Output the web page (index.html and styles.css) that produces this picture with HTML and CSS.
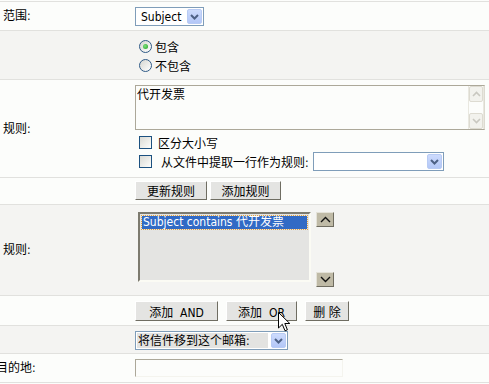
FILE: index.html
```html
<!DOCTYPE html>
<html>
    <head>
        <meta charset="utf-8">
        <link rel="stylesheet" href="styles.css">
    </head>
    <body>
        <div class="form">
            <div class="row row_scope">
                <div class="row__label">范围:</div>
                <div class="row__field">
                    <div class="select select_scope">
                        <span class="select__text">Subject</span>
                        <span class="select__btn"><svg width="9" height="6" viewBox="0 0 9 6"><polyline points="1,1 4.5,4.5 8,1" fill="none" stroke="#4d6185" stroke-width="2"/></svg></span>
                    </div>
                </div>
            </div>
            <div class="row row_gray row_match">
                <div class="row__label"></div>
                <div class="row__field">
                    <div class="radio"><span class="radio__dot radio__dot_checked"></span>包含</div>
                    <div class="radio"><span class="radio__dot"></span>不包含</div>
                </div>
            </div>
            <div class="row row_rule">
                <div class="row__label">规则:</div>
                <div class="row__field">
                    <div class="textarea">
                        <div class="textarea__text">代开发票</div>
                        <div class="textarea__scroll">
                            <span class="scroll-btn"><svg width="9" height="6" viewBox="0 0 9 6"><polyline points="1,5 4.5,1.5 8,5" fill="none" stroke="#c9c8c0" stroke-width="1.6"/></svg></span>
                            <span class="scroll-btn"><svg width="9" height="6" viewBox="0 0 9 6"><polyline points="1,1 4.5,4.5 8,1" fill="none" stroke="#c9c8c0" stroke-width="1.6"/></svg></span>
                        </div>
                    </div>
                    <div class="check"><span class="check__box"></span>区分大小写</div>
                    <div class="check"><span class="check__box"></span><span class="check__label_wide">从文件中提取一行作为规则:</span>
                        <div class="select select_file">
                            <span class="select__text"></span>
                            <span class="select__btn"><svg width="9" height="6" viewBox="0 0 9 6"><polyline points="1,1 4.5,4.5 8,1" fill="none" stroke="#4d6185" stroke-width="2"/></svg></span>
                        </div>
                    </div>
                </div>
            </div>
            <div class="row row_update">
                <div class="row__label"></div>
                <div class="row__field buttons buttons_tight">
                    <button class="btn btn_update">更新规则</button>
                    <button class="btn btn_add-rule">添加规则</button>
                </div>
            </div>
            <div class="row row_gray row_list">
                <div class="row__label">规则:</div>
                <div class="row__field list-wrap">
                    <div class="listbox">
                        <div class="listbox__item">Subject contains 代开发票</div>
                    </div>
                    <div class="arrows">
                        <span class="arrow-btn"><svg width="11" height="7" viewBox="0 0 11 7"><polyline points="1,6 5.5,1.5 10,6" fill="none" stroke="#111" stroke-width="1.4"/></svg></span>
                        <span class="arrow-btn"><svg width="11" height="7" viewBox="0 0 11 7"><polyline points="1,1 5.5,5.5 10,1" fill="none" stroke="#111" stroke-width="1.4"/></svg></span>
                    </div>
                </div>
            </div>
            <div class="row row_logic">
                <div class="row__label"></div>
                <div class="row__field buttons">
                    <button class="btn btn_tall btn_and">添加&nbsp; AND</button>
                    <button class="btn btn_tall btn_or">添加&nbsp; OR</button>
                    <button class="btn btn_tall btn_del">删 除</button>
                </div>
            </div>
            <div class="row row_gray row_action">
                <div class="row__label"></div>
                <div class="row__field">
                    <div class="select select_action">
                        <span class="select__text select__text_hl">将信件移到这个邮箱:</span>
                        <span class="select__btn"><svg width="9" height="6" viewBox="0 0 9 6"><polyline points="1,1 4.5,4.5 8,1" fill="none" stroke="#4d6185" stroke-width="2"/></svg></span>
                    </div>
                </div>
            </div>
            <div class="row row_dest">
                <div class="row__label row__label_cut">目的地:</div>
                <div class="row__field">
                    <div class="input"></div>
                </div>
            </div>
        </div>

        <svg class="cursor" width="13" height="21" viewBox="0 0 13 21">
            <path d="M0.5 0.5 L0.5 16 L4.3 12.3 L7 18.8 L9.4 17.8 L6.8 11.5 L11.8 11.5 Z" fill="#fff" stroke="#000" stroke-width="1"/>
        </svg>
    </body>
</html>
```

FILE: styles.css
```css
body, html {
    margin: 0;
    background-color: #fcfdfb;
    font-family: Tahoma, "DejaVu Sans Condensed", "Noto Sans CJK SC", sans-serif;
    font-size: 12px;
    color: #000;
}

* {
    box-sizing: border-box;
}

body {
    position: relative;
}

.form {
    margin-top: 1px;
    border-top: 1px solid #e1e1de;
}

.row {
    display: flex;
    border-bottom: 1px solid #e1e1de;
    background-color: #fcfdfb;
}

.row_gray {
    background-color: #f4f4f2;
}

.row_scope { height: 29px; }
.row_match { height: 49px; }
.row_rule { height: 98px; }
.row_update { height: 27px; }
.row_list { height: 91px; }
.row_logic { height: 30px; }
.row_action { height: 28px; }
.row_dest { height: 29px; }

.row__label {
    width: 135px;
    flex-shrink: 0;
    padding-left: 3px;
    align-self: center;
    white-space: nowrap;
    line-height: 14px;
}

.row__label_cut {
    text-indent: -7px;
}

.row__field {
    flex: 1;
    padding-top: 5px;
}

.row_match .row__field { padding-top: 6px; }
.row_update .row__field { padding-top: 3px; }
.row_list .row__field { padding-top: 7px; }

/* select */

.select {
    display: flex;
    align-items: center;
    height: 19px;
    border: 1px solid #7f9db9;
    background-color: #fff;
    padding: 1px;
}

.select_scope { width: 69px; }
.select_file { width: 131px; margin-left: 4px; }
.select_action { width: 153px; }

.select__text {
    flex: 1;
    padding-left: 4px;
    white-space: nowrap;
    line-height: 14px;
}

.select__text_hl {
    align-self: stretch;
    display: flex;
    align-items: center;
    padding-left: 1px;
    margin-right: 3px;
    background-color: #e3e3e1;
}

.select__btn {
    width: 15px;
    height: 15px;
    display: flex;
    align-items: center;
    justify-content: center;
    border: 1px solid #b8cbf4;
    border-radius: 2px;
    background: linear-gradient(#cddbfd, #b3c7f7);
}

/* radio + checkbox */

.radio, .check {
    display: flex;
    align-items: center;
    height: 19px;
    margin-left: 4px;
    white-space: nowrap;
}

.radio__dot {
    width: 13px;
    height: 13px;
    margin-right: 3px;
    border: 1px solid #2f5a86;
    border-radius: 50%;
    background: linear-gradient(135deg, #d6d6d0, #fff);
    display: flex;
    align-items: center;
    justify-content: center;
}

.radio__dot_checked::after {
    content: "";
    width: 5px;
    height: 5px;
    border-radius: 50%;
    background: radial-gradient(circle at 40% 40%, #7fe07f, #21a121);
}

.check__box {
    width: 13px;
    height: 13px;
    margin-right: 6px;
    border: 1px solid #1c5180;
    background: linear-gradient(135deg, #dadad4, #fdfdfb);
}

.check__label_wide {
    margin-left: 3px;
}

/* textarea */

.textarea {
    display: flex;
    width: 350px;
    height: 45px;
    margin-bottom: 3px;
    border: 1px solid #aca899;
    border-right-color: #dcdad0;
    background-color: #fcfdfb;
}

.textarea__text {
    flex: 1;
    padding: 2px 1px;
    line-height: 14px;
}

.textarea__scroll {
    width: 16px;
    display: flex;
    flex-direction: column;
    justify-content: space-between;
    border-left: 1px solid #e9e8e0;
    border-right: 1px solid #e9e8e0;
}

.scroll-btn {
    height: 16px;
    display: flex;
    align-items: center;
    justify-content: center;
    border: 1px solid #dddbd1;
    border-radius: 2px;
    background-color: #f2f2ed;
}

/* buttons */

.buttons {
    display: flex;
    align-items: flex-start;
    gap: 8px;
}

.buttons_tight {
    gap: 3px;
}

.btn {
    -webkit-appearance: none;
    height: 19px;
    padding: 0;
    margin: 0;
    border: 1px solid;
    border-color: #fff #6f6d62 #6f6d62 #fff;
    border-radius: 0;
    background-color: #e4e4e2;
    font: inherit;
    color: #000;
    white-space: nowrap;
    display: flex;
    align-items: center;
    justify-content: center;
}

.btn_tall { height: 20px; }
.btn_update { width: 72px; }
.btn_add-rule { width: 71px; }
.btn_and { width: 83px; }
.btn_or { width: 71px; }
.btn_del { width: 44px; }

/* rule list */

.list-wrap {
    display: flex;
    align-items: flex-start;
}

.listbox {
    width: 173px;
    height: 70px;
    margin-left: 3px;
    padding: 2px 2px;
    border: 2px solid;
    border-color: #7c7a6f #fbfbf4 #fbfbf4 #7c7a6f;
    background-color: #e4e4e2;
}

.listbox__item {
    height: 13px;
    line-height: 12px;
    padding-left: 1px;
    background-color: #316ac5;
    color: #fff;
    outline: 1px dotted #e0a040;
    white-space: nowrap;
    overflow: hidden;
}

.arrows {
    height: 75px;
    margin-left: 5px;
    display: flex;
    flex-direction: column;
    justify-content: space-between;
}

.arrow-btn {
    width: 18px;
    height: 15px;
    display: flex;
    align-items: center;
    justify-content: center;
    border: 1px solid;
    border-color: #e4e2d8 #6f6c60 #6f6c60 #e4e2d8;
    background-color: #bfbaa6;
}

/* destination */

.input {
    width: 208px;
    height: 18px;
    border: 1px solid;
    border-color: #aca899 #f4f4ee #f4f4ee #aca899;
    background-color: #fcfdfb;
}

.cursor {
    position: absolute;
    left: 278px;
    top: 312px;
}
```
